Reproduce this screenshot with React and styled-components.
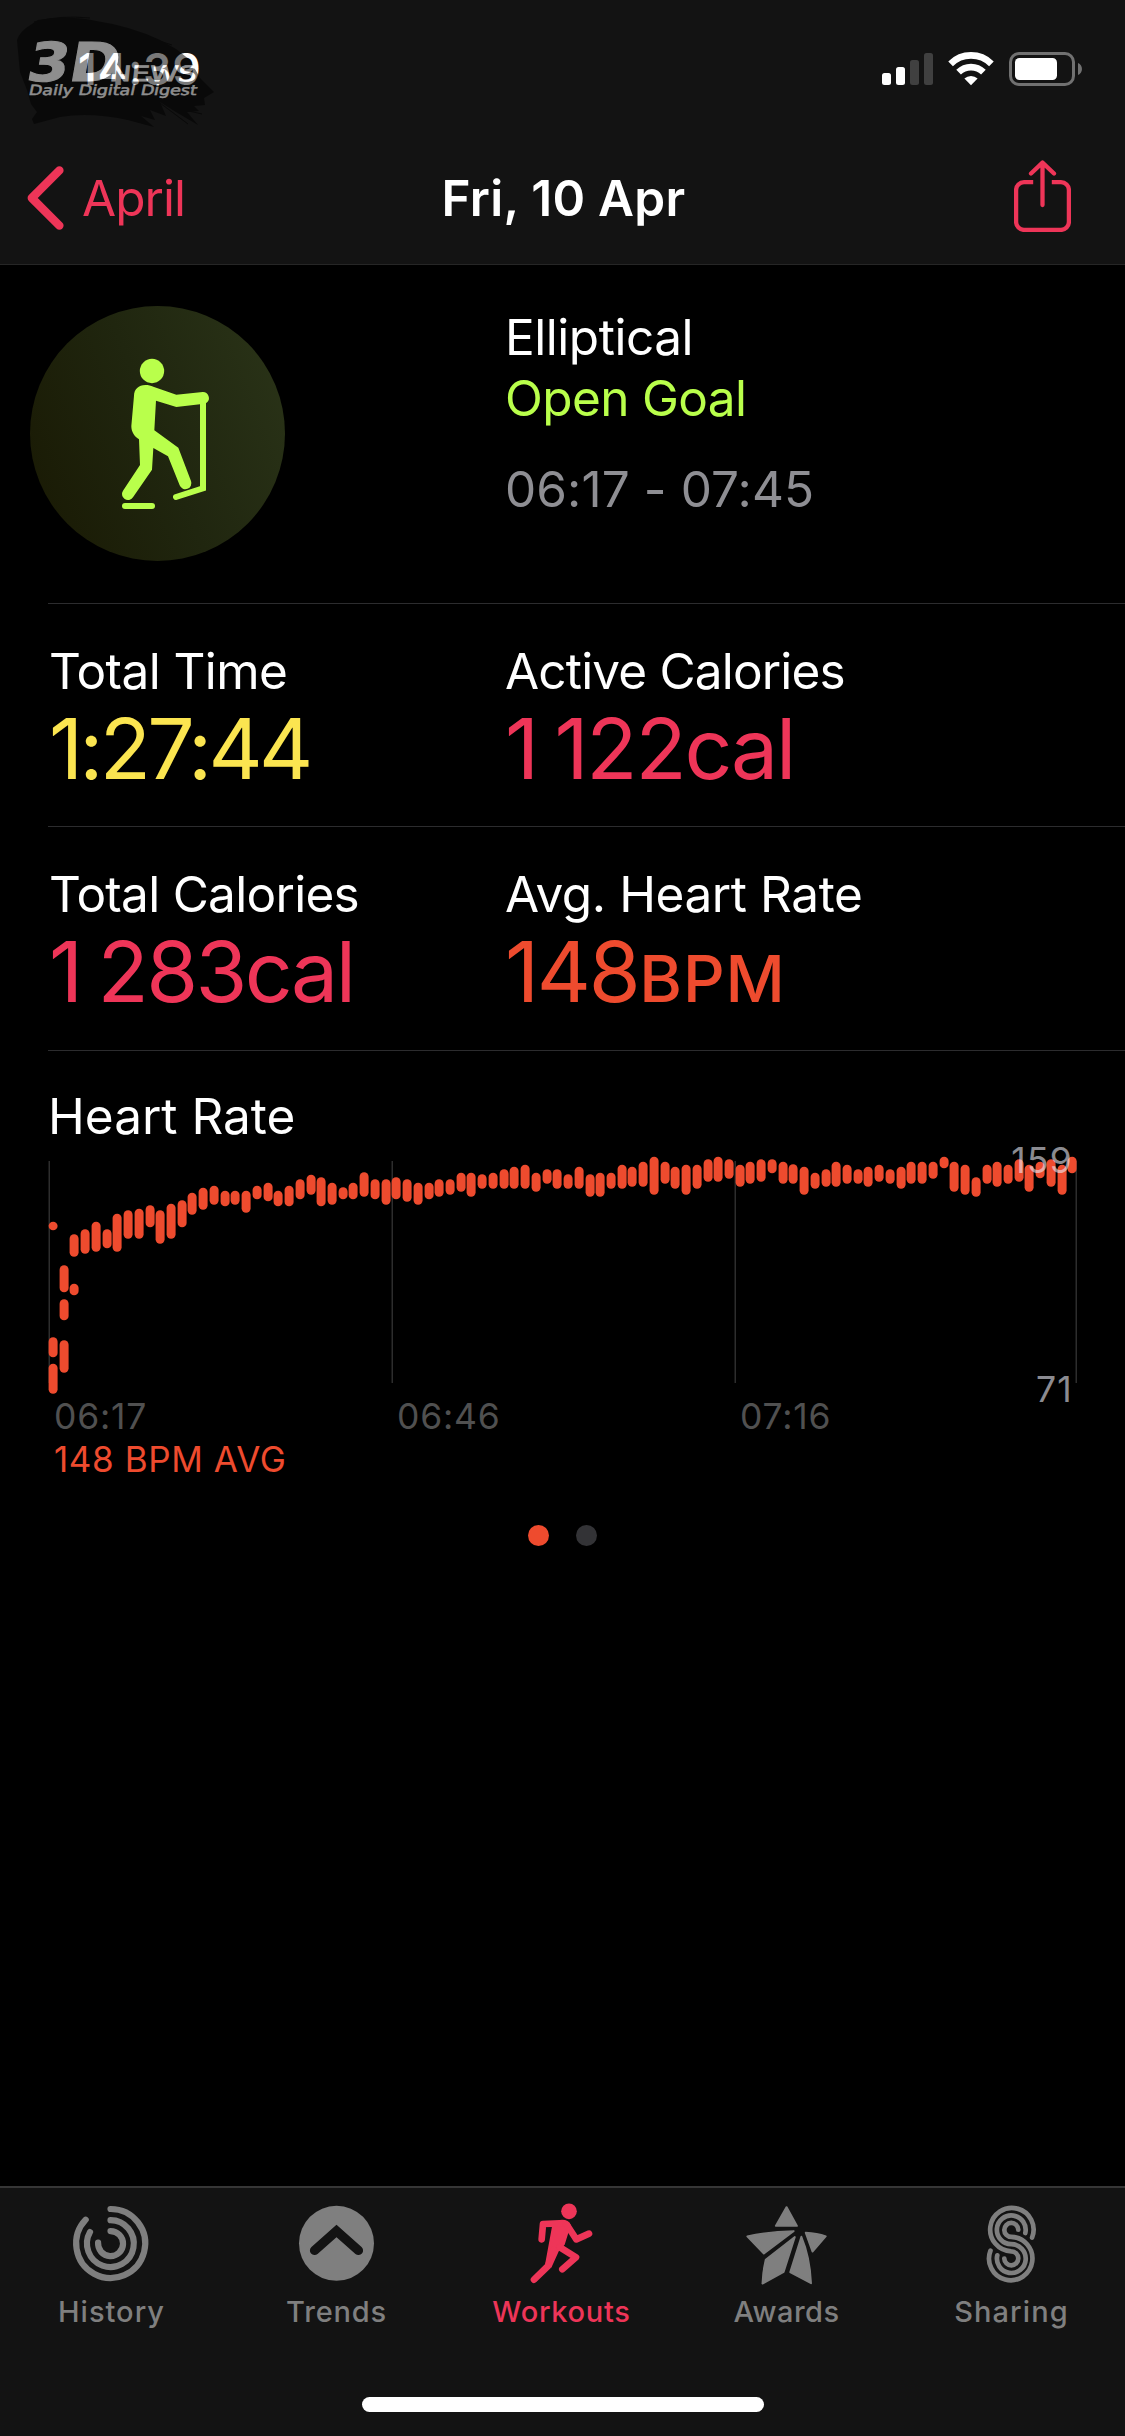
import React from "react";
import styled, { createGlobalStyle } from "styled-components";

const GlobalStyle = createGlobalStyle`
  body {
    margin: 0;
    background: #000;
  }
`;

const pink = "#ee3558";
const orange = "#ee4b2e";
const green = "#b9ff4b";
const yellow = "#fbe550";

const Screen = styled.div`
  display: flex;
  flex-direction: column;
  position: relative;
  width: 1125px;
  height: 2436px;
  background: #000;
  color: #fff;
  font-family: Inter, "Liberation Sans", sans-serif;
  font-size: 49.5px;
  overflow: hidden;
  svg {
    display: block;
  }
`;

const Header = styled.header`
  box-sizing: border-box;
  height: 265px;
  background: #131313;
  border-bottom: 1px solid #262626;
`;

const StatusBar = styled.div`
  display: flex;
  align-items: center;
  justify-content: space-between;
  height: 138px;
  padding: 0 43px 0 78px;
`;

const Clock = styled.span`
  font-size: 44px;
  font-weight: 600;
  line-height: 60px;
  letter-spacing: 1.14px;
`;

const StatusIcons = styled.div`
  display: flex;
  align-items: center;
  gap: 15px;
`;

const NavBar = styled.nav`
  display: grid;
  grid-template-columns: 1fr auto 1fr;
  align-items: center;
  height: 120px;
  padding: 0 27px;
`;

const BackLink = styled.a`
  display: flex;
  align-items: center;
  gap: 18px;
  color: ${pink};
  letter-spacing: -0.96px;
`;

const NavTitle = styled.h1`
  margin: 0 0 0 2px;
  font-size: 49.5px;
  font-weight: 600;
  letter-spacing: 0.27px;
`;

const ShareButton = styled.span`
  justify-self: end;
  margin: -4px 27px 0 0;
`;

const Watermark = styled.div`
  position: absolute;
  left: 10px;
  top: 10px;
  opacity: 0.52;
`;

const Summary = styled.section`
  display: grid;
  grid-template-columns: 475px 1fr;
  box-sizing: border-box;
  height: 338px;
  padding: 41px 0 0 30px;
`;

const SummaryText = styled.div`
  display: flex;
  flex-direction: column;
  padding-top: 1px;
  line-height: 61px;
`;

const WorkoutName = styled.span`
  letter-spacing: -0.47px;
`;

const Goal = styled.span`
  color: ${green};
  letter-spacing: -0.63px;
`;

const Period = styled.span`
  margin-top: 30px;
  color: #8e8e93;
  letter-spacing: 0.1px;
`;

const StatRow = styled.section`
  display: grid;
  grid-template-columns: 456px 1fr;
  box-sizing: border-box;
  height: ${(props) => props.$height}px;
  margin-left: 48px;
  padding: 37px 0 0 1px;
  border-top: 1px solid #2c2c2e;
`;

const Stat = styled.div`
  display: flex;
  flex-direction: column;
`;

const StatLabel = styled.span`
  line-height: 60px;
  letter-spacing: ${(props) => props.$spacing}px;
`;

const StatValue = styled.span`
  font-size: 84px;
  line-height: 95px;
  white-space: nowrap;
  word-spacing: -4px;
  color: ${(props) => props.$color};
  letter-spacing: ${(props) => props.$spacing}px;
`;

const Unit = styled.span`
  margin-left: 1px;
  font-size: 65px;
  font-weight: 500;
  letter-spacing: 1px;
`;

const ChartSection = styled.section`
  margin-left: 48px;
  padding-top: 35px;
  border-top: 1px solid #2c2c2e;
`;

const ChartTitle = styled.h2`
  margin: 0;
  font-size: 49.5px;
  font-weight: 400;
  line-height: 60px;
`;

const Plot = styled.div`
  position: relative;
  height: 250px;
`;

const Bound = styled.span`
  position: absolute;
  right: 52px;
  top: ${(props) => props.$top}px;
  font-size: 35.5px;
  line-height: 42px;
  letter-spacing: 1.2px;
  color: rgba(235, 235, 245, 0.6);
`;

const TimeAxis = styled.div`
  display: grid;
  grid-template-columns: 343px 343px 1fr;
  padding-left: 6px;
  font-size: 35.5px;
  line-height: 42px;
  letter-spacing: 0.8px;
  color: #505050;
`;

const Average = styled.div`
  padding-left: 6px;
  font-size: 35px;
  line-height: 42px;
  letter-spacing: 0.6px;
  color: ${orange};
`;

const Pager = styled.div`
  display: flex;
  justify-content: center;
  gap: 27px;
  margin-top: 45px;
`;

const Dot = styled.i`
  width: 21px;
  height: 21px;
  border-radius: 50%;
  background: ${(props) => (props.$active ? orange : "#333336")};
`;

const TabBar = styled.footer`
  display: flex;
  flex-direction: column;
  align-items: center;
  box-sizing: border-box;
  height: 250px;
  margin-top: auto;
  background: #131313;
  border-top: 2px solid #363636;
`;

const Tabs = styled.div`
  display: grid;
  grid-template-columns: repeat(5, 225px);
  width: 1127px;
  height: 209px;
`;

const Tab = styled.a`
  display: flex;
  flex-direction: column;
  align-items: center;
  padding-top: 11px;
  font-size: 29px;
  font-weight: 500;
  line-height: 45px;
  letter-spacing: ${(props) => props.$spacing}px;
  color: ${(props) => (props.$active ? pink : "#7f7f7f")};
`;

const HomeIndicator = styled.div`
  width: 402px;
  height: 15px;
  border-radius: 8px;
  background: #fff;
`;

// [slot, top, bottom], in thirds of a pixel
const samples = [
  [0, 425, 451], [0, 772, 832], [0, 851, 941],
  [1, 556, 637], [1, 658, 721], [1, 781, 878],
  [2, 463, 530], [2, 611, 646],
  [3, 448, 521], [4, 425, 515], [5, 448, 505], [6, 401, 515],
  [7, 391, 476], [8, 386, 476], [9, 376, 442], [10, 391, 491],
  [11, 371, 476], [12, 361, 442], [13, 338, 404], [14, 323, 389],
  [15, 317, 374], [16, 332, 379], [17, 332, 374], [18, 332, 398],
  [19, 317, 358], [20, 308, 364], [21, 332, 379], [22, 317, 379],
  [23, 298, 358], [24, 284, 344], [25, 292, 379], [26, 308, 374],
  [27, 322, 358], [28, 308, 358], [29, 277, 350], [30, 298, 358],
  [31, 298, 374], [32, 292, 358], [33, 298, 365], [34, 308, 374],
  [35, 308, 358], [36, 298, 350], [37, 298, 344], [38, 278, 335],
  [39, 278, 350], [40, 283, 326], [41, 278, 326], [42, 268, 326],
  [43, 260, 326], [44, 254, 326], [45, 278, 335], [46, 268, 311],
  [47, 268, 326], [48, 283, 326], [49, 260, 326], [50, 283, 350],
  [51, 278, 350], [52, 278, 326], [53, 254, 326], [54, 260, 320],
  [55, 245, 320], [56, 230, 344], [57, 245, 311], [58, 260, 326],
  [59, 254, 344], [60, 254, 326], [61, 238, 305], [62, 230, 305],
  [63, 238, 296], [64, 254, 320], [65, 245, 311], [66, 238, 305],
  [67, 238, 280], [68, 245, 311], [69, 253, 311], [70, 260, 344],
  [71, 278, 326], [72, 268, 320], [73, 245, 320], [74, 254, 311],
  [75, 268, 311], [76, 260, 320], [77, 254, 305], [78, 268, 311],
  [79, 260, 326], [80, 245, 311], [81, 245, 311], [82, 245, 296],
  [83, 230, 265], [84, 245, 335], [85, 254, 344], [86, 292, 350],
  [87, 254, 311], [88, 245, 320], [89, 254, 311], [90, 238, 305],
  [91, 254, 335], [92, 245, 295], [93, 238, 320], [94, 254, 344],
  [95, 230, 280],
];

const gridLines = [0, 343, 686, 1027];

const HeartRateChart = () => (
  <svg width="1040" height="260" viewBox="48 1146 1040 260">
    {gridLines.map((x) => (
      <rect key={x} x={48.5 + x} y="1161" width="1.5" height="222" fill="#2d2d2d" />
    ))}
    {samples.map(([slot, top, bottom]) => (
      <rect
        key={`${slot}-${top}`}
        x={48.6 + Math.round(slot * 10.73)}
        y={1080 + top / 3}
        width="9"
        height={(bottom - top) / 3}
        rx="4.5"
        ry="4.4"
        fill={orange}
      />
    ))}
  </svg>
);

const SignalIcon = () => (
  <svg width="51" height="34" viewBox="0 0 51 34" fill="#fff">
    <rect x="0" y="21" width="9" height="12" rx="2.5" />
    <rect x="14" y="15" width="9" height="18" rx="2.5" />
    <rect x="28" y="8" width="9" height="25" rx="2.5" fill="#404040" />
    <rect x="42" y="1" width="9" height="32" rx="2.5" fill="#404040" />
  </svg>
);

const WifiIcon = () => (
  <svg width="46" height="34" viewBox="0 0 46 34" fill="none" stroke="#fff">
    <path d="M2.6 11.8 A29 29 0 0 1 43.4 11.8" strokeWidth="6.6" />
    <path d="M10.6 20.2 A17.6 17.6 0 0 1 35.4 20.2" strokeWidth="6.6" />
    <path d="M23 33.2 L16.4 26.6 A9.4 9.4 0 0 1 29.6 26.6 Z" fill="#fff" stroke="none" />
  </svg>
);

const BatteryIcon = () => (
  <svg width="73" height="34" viewBox="0 0 73 34">
    <rect x="1.5" y="1.5" width="63" height="31" rx="8.5" fill="none" stroke="#717171" strokeWidth="3" />
    <rect x="6" y="6" width="42" height="22" rx="4.5" fill="#fff" />
    <path d="M69 11 C74.3 13 74.3 21 69 23 Z" fill="#717171" />
  </svg>
);

const BackIcon = () => (
  <svg width="37" height="64" viewBox="0 0 37 64" fill="none" stroke={pink} strokeWidth="8.4" strokeLinecap="round" strokeLinejoin="round">
    <path d="M32.4 4.4 L4.8 32 L32.4 59.6" />
  </svg>
);

const ShareIcon = () => (
  <svg width="57" height="72" viewBox="0 0 57 72" fill="none" stroke={pink} strokeWidth="4.3">
    <path d="M19.2 22.1 H10 A7.9 7.9 0 0 0 2.1 30 V62 A7.9 7.9 0 0 0 10 69.9 H47 A7.9 7.9 0 0 0 54.9 62 V30 A7.9 7.9 0 0 0 47 22.1 H37.8" />
    <path d="M28.5 3 V45 M17 13.5 L28.5 2.6 L40 13.5" strokeLinecap="round" strokeLinejoin="round" />
  </svg>
);

const LogoMark = () => (
  <svg width="210" height="120" viewBox="10 10 210 120">
    <path
      fill="#000"
      d="M17 40 Q20 31 32 24 L38 20 Q70 15 96 21 Q130 26 160 40 L176 49 L190 60 L200 78 L214 92 L204 98 L205 105 L194 106 L199 111 L187 112 L198 125 L176 112 L160 102 L166 116 L150 110 L155 120 L141 116 L154 127 L128 120 Q90 112 60 117 L34 124 L32 119 L37 112 L31 104 L27 90 L20 72 Z"
    />
    <path
      fill="none"
      stroke="#000"
      strokeWidth="1"
      d="M34 22 Q60 15 90 18 M150 38 L172 45 M160 103 L188 124 M176 108 L202 114 M120 117 L150 125"
    />
    <g fill="#fff" fontFamily="DejaVu Sans, sans-serif">
      <text transform="translate(25 81) skewX(-10)" fontSize="53.5" fontWeight="700" stroke="#fff" strokeWidth="1" textLength="92" lengthAdjust="spacingAndGlyphs">3D</text>
      <text transform="translate(109 81) skewX(-6)" fontSize="21" fontWeight="400" stroke="#fff" strokeWidth="0.8" textLength="87" lengthAdjust="spacingAndGlyphs">NEWS</text>
      <text transform="translate(28 95) skewX(-12)" fontSize="14" fontWeight="400" stroke="#fff" strokeWidth="0.5" textLength="168" lengthAdjust="spacingAndGlyphs">Daily Digital Digest</text>
    </g>
  </svg>
);

const EllipticalIcon = () => (
  <svg width="255" height="255" viewBox="90 78 765 765">
    <defs>
      <linearGradient id="badge" x1="0" y1="0.7" x2="1" y2="0.3">
        <stop offset="0" stopColor="#1a1b05" />
        <stop offset="0.5" stopColor="#20260f" />
        <stop offset="1" stopColor="#293217" />
      </linearGradient>
    </defs>
    <circle cx="472.5" cy="460.5" r="382.5" fill="url(#badge)" />
    <g fill={green}>
      <circle cx="456" cy="273" r="36.5" />
      <path d="M402 347 C402 328 416 315 436 315 C446 315 452 317 460 320 L529 344 L608 336 A18 18 0 0 1 620 368 L600 373 L529 381 L468 362 L463 451 L535 503 L573 603 A18 18 0 0 1 539 616 L504 529 L460 504 L456 569 L399 652 A18 18 0 0 1 369 632 L420 555 L417 478 C402 468 394 455 394 438 Z" />
    </g>
    <g fill="none" stroke={green} strokeWidth="18" strokeLinecap="round">
      <path d="M609 360 V625 L528 651" />
      <path d="M375 678 H456" />
    </g>
  </svg>
);

const HistoryIcon = () => (
  <svg width="90" height="90" viewBox="0 0 90 90" fill="none" stroke="currentColor" strokeWidth="6.2" strokeLinecap="round">
    <path d="M43.5 10 A34.5 34.5 0 1 1 18.7 20.7" />
    <path d="M43.5 21.2 A23.4 23.4 0 1 1 23 33.1" />
    <path d="M43.5 32.1 A12.5 12.5 0 1 1 31.1 43.6" />
  </svg>
);

const TrendsIcon = () => (
  <svg width="90" height="90" viewBox="0 0 90 90">
    <circle cx="44.5" cy="44.3" r="37.5" fill="currentColor" />
    <path d="M22.5 51.5 L44.5 32 L66.5 51.5" fill="none" stroke="#131313" strokeWidth="9.2" strokeLinecap="round" />
  </svg>
);

const WorkoutsIcon = () => (
  <svg width="90" height="90" viewBox="112 27 270 270" fill="currentColor">
    <circle cx="268" cy="64" r="23.5" />
    <path d="M218 104 L240 90 Q266 87 273 104 L268 122 L255 164 L238 182 L215 233 L196 224 Z" />
    <g fill="none" stroke="currentColor" strokeWidth="20" strokeLinecap="round" strokeLinejoin="round">
      <path d="M186 148 L190 102 L240 100" />
      <path d="M262 105 L290 148 L328 131" />
      <path d="M222 180 L205 228 L163 269" />
      <path d="M241 172 L289 202 L248 238" />
    </g>
  </svg>
);

const AwardsIcon = () => (
  <svg width="90" height="90" viewBox="0 0 90 90" fill="currentColor" stroke="currentColor" strokeLinejoin="round">
    <g transform="translate(4.2 7) scale(0.3604 0.3333) translate(-518 -108)" strokeWidth="5">
      <path d="M600 168 L630 111 L659 168 Z" />
      <path d="M521 199 Q585 184 650 183 L567 251 Z" />
      <path d="M683 188 Q715 190 739 199 L702 245 Z" />
      <path d="M653 201 L622 306 L563 341 Q564 305 572 269 Z" />
      <path d="M671 200 Q695 262 698 340 L640 307 Z" />
    </g>
  </svg>
);

const SharingIcon = () => (
  <svg width="90" height="90" viewBox="0 0 90 90" fill="none" stroke="currentColor" strokeWidth="4.7" strokeLinecap="round">
    <path d="M65.1 38.5 A21.7 21.7 0 1 0 44.3 52.3 A7 7 0 1 1 37.3 59.5" />
    <path d="M58.3 34 A14.4 14.4 0 1 0 44.3 45.2 A14.4 14.4 0 1 1 30.3 56.3" />
    <path d="M51.3 30.7 A7 7 0 1 0 44.3 37.9 A21.7 21.7 0 1 1 23.5 51.7" />
  </svg>
);

const tabs = [
  { name: "History", icon: HistoryIcon, spacing: 1.02 },
  { name: "Trends", icon: TrendsIcon, spacing: 0.83 },
  { name: "Workouts", icon: WorkoutsIcon, spacing: 0.72, active: true },
  { name: "Awards", icon: AwardsIcon, spacing: 0.47 },
  { name: "Sharing", icon: SharingIcon, spacing: 1.09 },
];

export default function App() {
  return (
    <Screen>
      <GlobalStyle />
      <Header>
        <StatusBar>
          <Clock>14:39</Clock>
          <StatusIcons>
            <SignalIcon />
            <WifiIcon />
            <BatteryIcon />
          </StatusIcons>
        </StatusBar>
        <NavBar>
          <BackLink>
            <BackIcon />
            April
          </BackLink>
          <NavTitle>Fri, 10 Apr</NavTitle>
          <ShareButton>
            <ShareIcon />
          </ShareButton>
        </NavBar>
      </Header>
      <Watermark>
        <LogoMark />
      </Watermark>

      <Summary>
        <EllipticalIcon />
        <SummaryText>
          <WorkoutName>Elliptical</WorkoutName>
          <Goal>Open Goal</Goal>
          <Period>06:17 - 07:45</Period>
        </SummaryText>
      </Summary>

      <StatRow $height={223}>
        <Stat>
          <StatLabel $spacing={-0.58}>Total Time</StatLabel>
          <StatValue $color={yellow} $spacing={-3.8}>1:27:44</StatValue>
        </Stat>
        <Stat>
          <StatLabel $spacing={-0.83}>Active Calories</StatLabel>
          <StatValue $color={pink} $spacing={-2.2}>1 122cal</StatValue>
        </Stat>
      </StatRow>
      <StatRow $height={224}>
        <Stat>
          <StatLabel $spacing={-0.71}>Total Calories</StatLabel>
          <StatValue $color={pink} $spacing={-2.6}>1 283cal</StatValue>
        </Stat>
        <Stat>
          <StatLabel $spacing={-0.41}>Avg. Heart Rate</StatLabel>
          <StatValue $color={orange} $spacing={-2.4}>
            148<Unit>BPM</Unit>
          </StatValue>
        </Stat>
      </StatRow>

      <ChartSection>
        <ChartTitle>Heart Rate</ChartTitle>
        <Plot>
          <HeartRateChart />
          <Bound $top={-6}>159</Bound>
          <Bound $top={223}>71</Bound>
        </Plot>
        <TimeAxis>
          <span>06:17</span>
          <span>06:46</span>
          <span>07:16</span>
        </TimeAxis>
        <Average>148 BPM AVG</Average>
      </ChartSection>
      <Pager>
        <Dot $active />
        <Dot />
      </Pager>

      <TabBar>
        <Tabs>
          {tabs.map(({ name, icon: Icon, spacing, active }) => (
            <Tab key={name} $active={active} $spacing={spacing}>
              <Icon />
              {name}
            </Tab>
          ))}
        </Tabs>
        <HomeIndicator />
      </TabBar>
    </Screen>
  );
}
